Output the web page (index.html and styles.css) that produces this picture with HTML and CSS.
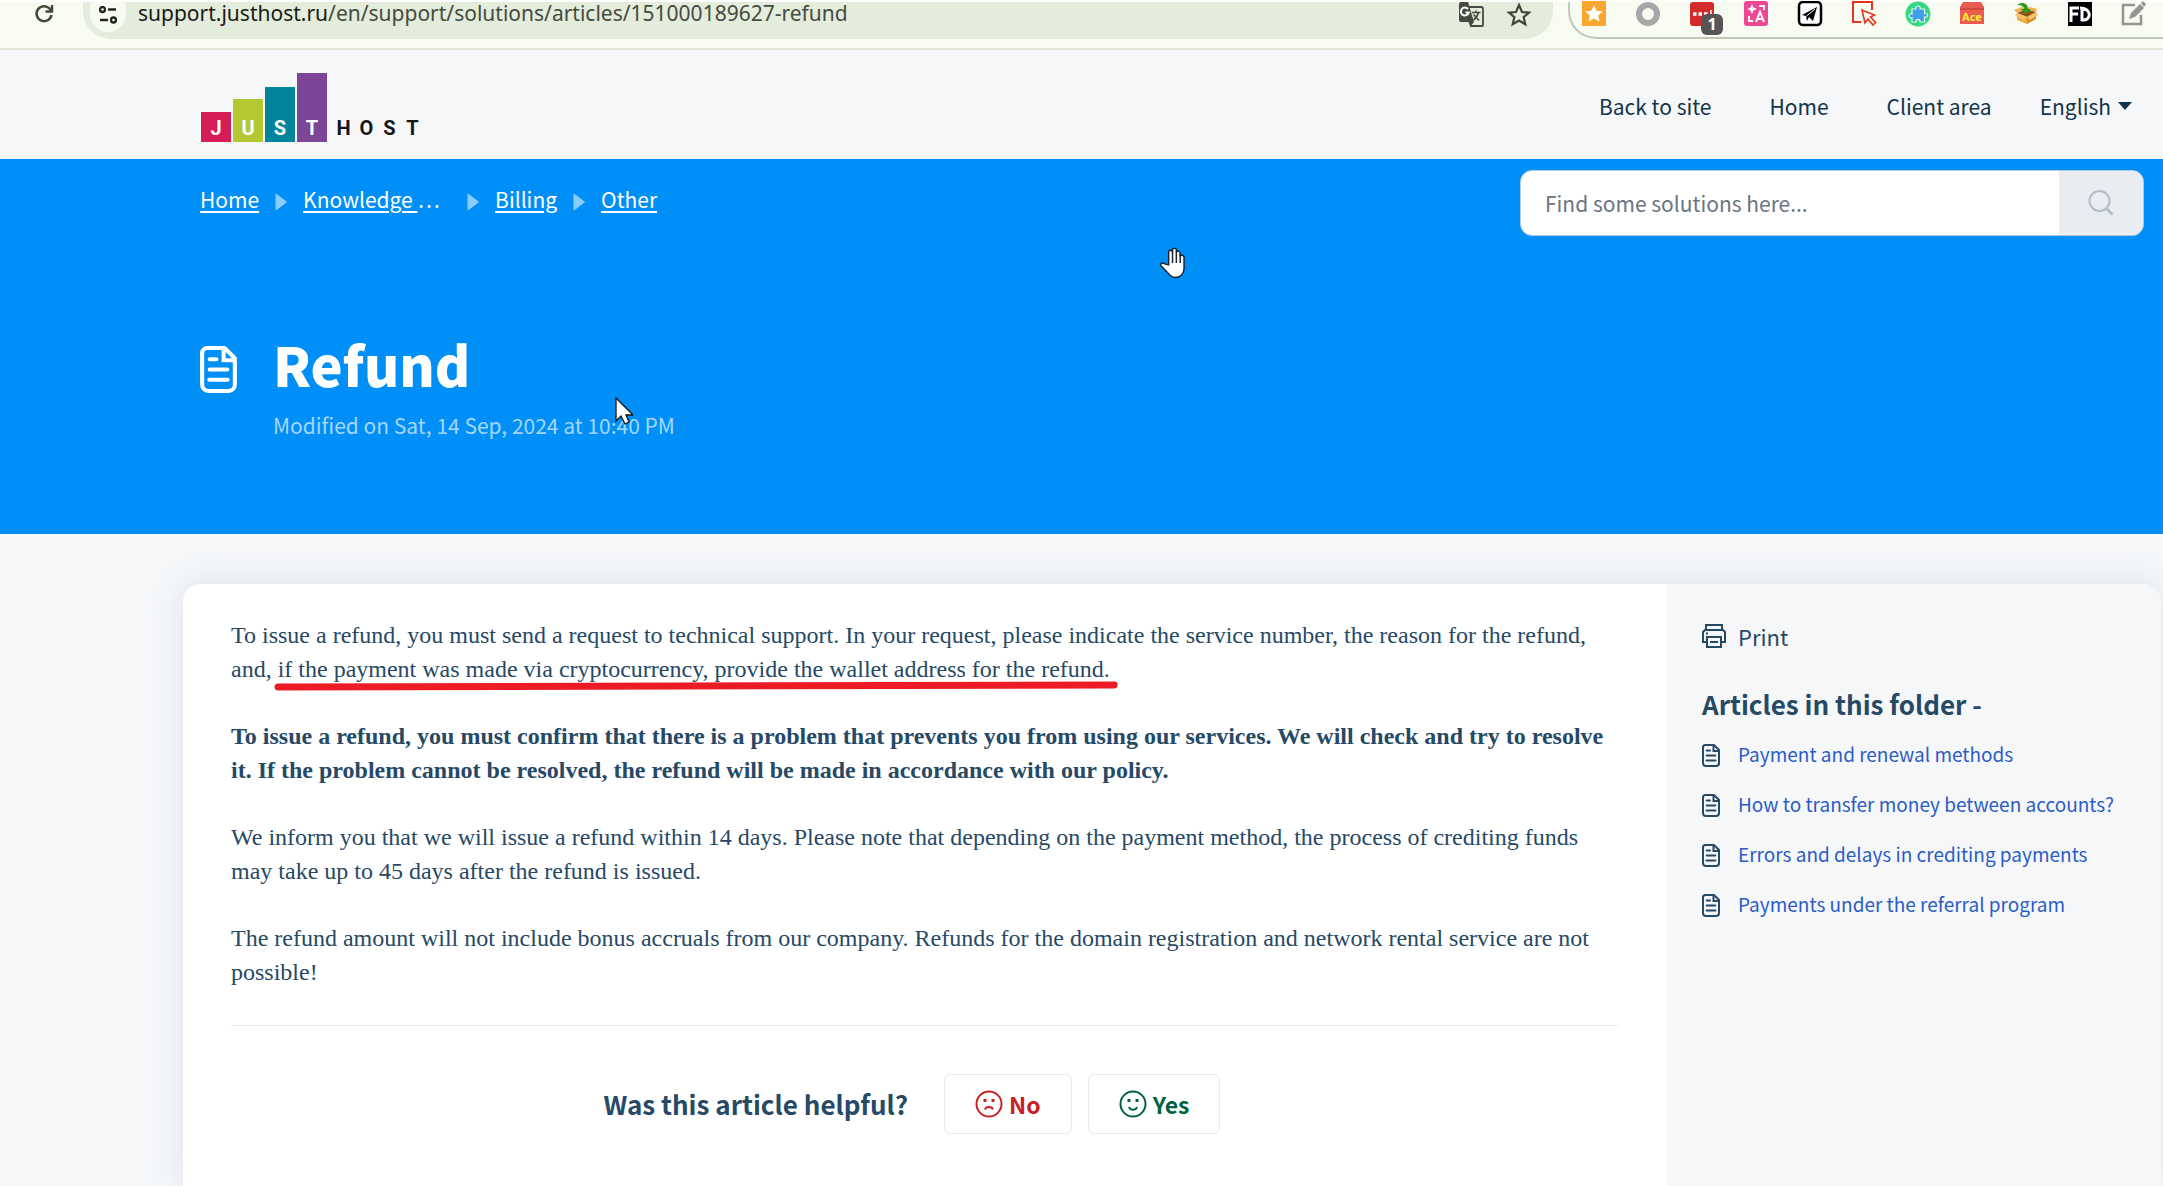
FILE: index.html
```html
<!DOCTYPE html>
<html lang="en">
<head>
<meta charset="utf-8">
<title>Refund</title>
<link rel="stylesheet" href="styles.css">
</head>
<body>
<svg class="sprite" aria-hidden="true">
  <symbol id="doc" viewBox="0 0 18 23">
    <path d="M3 1h9l5 5v13a3 3 0 0 1-3 3H4a3 3 0 0 1-3-3V3.500a2.500 2.500 0 0 1 2-2.500z" fill="none" stroke="currentColor" stroke-width="2" stroke-linejoin="round"/>
    <path d="M11.500 1v6H17" fill="none" stroke="currentColor" stroke-width="2"/>
    <path d="M4.700 6.500H8M4.700 11.500h8.600M4.500 16.500h9" fill="none" stroke="currentColor" stroke-width="2" stroke-linecap="round"/>
  </symbol>
  <symbol id="tri" viewBox="0 0 12 18"><path d="M1 1v16L11.500 9z" fill="currentColor" stroke="currentColor" stroke-linejoin="round"/></symbol>
</svg>

<header class="browser">
  <button class="reload" aria-label="Reload">
    <svg width="20" height="22" viewBox="0 0 20 22" fill="none" stroke="#3f4a3c" stroke-width="2.500"><path d="M17.500 12a7.500 7.500 0 1 1-2-6.500l2 2M18 2v6.500h-6.500"/></svg>
  </button>
  <div class="address">
    <span class="site-info"><svg width="20" height="18" viewBox="0 0 20 18" fill="none" stroke="#20251d" stroke-width="2.300"><circle cx="4.500" cy="3.500" r="2.500"/><path d="M10 3.500h8M2 14h8"/><circle cx="15.500" cy="14" r="2.500"/></svg></span>
    <span class="url"><b>support.justhost.ru</b>/en/support/solutions/articles/151000189627-refund</span>
    <svg class="translate" width="26" height="26" viewBox="0 0 26 26"><path d="M11 5h12a2 2 0 0 1 2 2v16a1 1 0 0 1-1 1H13l-2-5" fill="#e4ecdc" stroke="#444c41" stroke-width="1.800"/><path d="M2 0h8l6 20H3a2 2 0 0 1-2-2V2z" fill="#444c41"/><path d="M11 20h5l-3 4z" fill="#444c41"/><path d="M10 7a4 4 0 1 0 .8 3.500H7.500" fill="none" stroke="#fff" stroke-width="2"/><path d="M14 10.500h8.500M18 8.500v2M15.500 18c3-2 4-4 5-7.500M15.500 12.500l5.500 6" fill="none" stroke="#444c41" stroke-width="1.600"/></svg>
    <svg width="26" height="26" viewBox="0 0 26 26"><path d="M13 3l3 7 7 .6-5.400 4.600 1.700 7L13 18.500l-6.300 3.700 1.700-7L3 10.600l7-.6z" fill="none" stroke="#3f463c" stroke-width="2.200"/></svg>
  </div>
  <div class="extensions">
    <svg viewBox="0 0 26 26"><path d="M1 0h24v25H1z" fill="#fba62f"/><path d="M13 4l2.600 5.700 6.100.7-4.500 4.200 1.200 6-5.400-3-5.400 3 1.200-6-4.500-4.200 6.100-.7z" fill="#fff"/></svg>
    <svg viewBox="0 0 26 26"><circle cx="13" cy="13" r="9" fill="none" stroke="#a6a6a6" stroke-width="6"/></svg>
    <span class="badged"><svg viewBox="0 0 26 26"><rect x="1" y="1" width="24" height="24" rx="3" fill="#d32b2b"/><path d="M4 13h3.500M9.500 13H13M15 13h3.500" stroke="#fff" stroke-width="3.500"/><path d="M22 9v7" stroke="#fff" stroke-width="1.500"/></svg><span class="badge">1</span></span>
    <svg viewBox="0 0 26 26"><rect x="1" y="0" width="24" height="25" rx="3" fill="#ee4793"/><path d="M9 3l1.500 3.500L14 8l-3.500 1.500L9 13l-1.500-3.500L4 8l3.500-1.500z" fill="#fff"/><path d="M13 21l4-10 4 10M14.500 18h5M16 5h5v4M6 15v5h4" fill="none" stroke="#fff" stroke-width="2"/></svg>
    <svg viewBox="0 0 26 26"><rect x="2" y="1" width="22" height="23" rx="4" fill="#fff" stroke="#000" stroke-width="2.500"/><path d="M5 14L20 6l-4 14-4-4-2 4-1-5z"/><path d="M9.500 15L18 8" stroke="#fff"/></svg>
    <svg viewBox="0 0 26 26" fill="none" stroke="#e8321e" stroke-width="2"><path d="M10 21H2V1h19v8"/><path d="M11 9l3 13 3-4 5 6 2.500-2.500-5-5.500 4-2z" stroke-width="1.600"/></svg>
    <svg viewBox="0 0 26 26"><circle cx="13" cy="13" r="12.500" fill="#36d77f"/><path d="M7 8h4c-1.500-4 5.500-4 4 0h4.500v4.500c4-1.500 4 5 0 3.500v5H15c1-3.500-5-3.500-4 0H7v-4.500c-4 1.500-4-5 0-3.500z" fill="#3f9fe8" stroke="#d9fbe8" stroke-width="1.200"/></svg>
    <svg viewBox="0 0 26 26"><path d="M4 1h18l3 5v17H1V6z" fill="#eb5c50"/><path d="M1 8h24" stroke="#b83a33"/><text x="13" y="20" text-anchor="middle" class="ace">Ace</text></svg>
    <svg viewBox="0 0 26 26"><path d="M4 12l10 4 9-5v7l-9 5-10-4z" fill="#eda93f"/><path d="M14 16v7l9-5v-7z" fill="#d98f2e"/><path d="M4 12l9-4 10 3-9 5z" fill="#8f5417"/><path d="M4 12l-2 3 9 4 3-3zM23 11l2 3-8 5-3-3z" fill="#f6c36b"/><path d="M4 12L1 9l8-3 4 2zM23 11l1-3-7-2-4 2z" fill="#f0b352"/><path d="M4 4c5-4 11-2 11 4h3l-5 5-5-5h3c0-3-3-4-7-4z" fill="#2e9b1c"/></svg>
    <svg viewBox="0 0 26 26"><path d="M1 1h24v24H1z"/><path d="M4 21V7h8M4 13h7M15 7v12c10 1 10-12-2-12" fill="none" stroke="#fff" stroke-width="3"/></svg>
    <svg viewBox="0 0 26 26" fill="none" stroke="#929590" stroke-width="2.500"><path d="M14 4H2v19h18V14"/><path d="M8 18l2-6L19 3l4 4-9 9z" fill="#929590" stroke="none"/><path d="M20 2l2-2 3 3-2 3z" fill="#929590" stroke="none"/></svg>
  </div>
</header>

<nav class="topnav" aria-label="Main">
  <a class="logo" href="#" aria-label="Just Host">
    <span class="bar bar-j">J</span><span class="bar bar-u">U</span><span class="bar bar-s">S</span><span class="bar bar-t">T</span>
    <span class="host"><i>H</i><i>O</i><i>S</i><i>T</i></span>
  </a>
  <div class="links">
    <a href="#">Back to site</a>
    <a href="#">Home</a>
    <a href="#">Client area</a>
    <button class="language">English<svg width="14" height="8" viewBox="0 0 14 8"><path d="M0 0h14L7 8z" fill="currentColor"/></svg></button>
  </div>
</nav>

<section class="hero">
  <div class="hero-top">
    <nav class="crumbs" aria-label="Breadcrumb">
      <a href="#">Home</a><svg><use href="#tri"/></svg>
      <span class="crumb-wide"><a href="#">Knowledge </a>…</span><svg><use href="#tri"/></svg>
      <a href="#">Billing</a><svg><use href="#tri"/></svg>
      <a href="#">Other</a>
    </nav>
    <form class="search" onsubmit="return false">
      <input type="search" aria-label="Search solutions" placeholder="Find some solutions here...">
      <button aria-label="Search"><svg width="28" height="28" viewBox="0 0 28 28" fill="none" stroke="#b1bec9" stroke-width="2"><circle cx="12.500" cy="12" r="10"/><path d="M19.500 19.500l6 6" stroke-width="2.500"/></svg></button>
    </form>
  </div>
  <div class="title">
    <svg class="title-icon"><use href="#doc"/></svg>
    <div>
      <h1>Refund</h1>
      <p>Modified on Sat, 14 Sep, 2024 at 10:40 PM</p>
    </div>
  </div>
  <svg class="hand" viewBox="0 0 26 32"><path d="M9 18V5c0-3 4-3 4 0V3c0-3 4-3 4 0v2c0-2 4-2 4 1v3c1-2 4-1 4 1v12c0 5-4 9-9 9-4 0-6-2-8-5L1 19c-1-3 2-4 4-2z" fill="#fff" stroke="#14202c" stroke-width="1.500"/><path d="M13 4v12M17 4v12M21 7v9" stroke="#14202c" stroke-width="1.500"/></svg>
  <svg class="pointer" viewBox="0 0 18 28"><path d="M1 1v23l5-5 4 8 4-2-3-7h7z" fill="#fff" stroke="#111" stroke-width="1.300"/></svg>
</section>

<main class="sheet">
  <article>
    <p>To issue a refund, you must send a request to technical support. In your request, please indicate the service number, the reason for the refund,<br>and, <span class="marked">if the payment was made via cryptocurrency, provide the wallet address for the refund.<svg class="stroke" viewBox="0 0 844 12" preserveAspectRatio="none"><path d="M4 7L840 5" stroke="#ed1c24" stroke-width="7" stroke-linecap="round"/></svg></span></p>
    <p><strong>To issue a refund, you must confirm that there is a problem that prevents you from using our services. We will check and try to resolve<br>it. If the problem cannot be resolved, the refund will be made in accordance with our policy.</strong></p>
    <p>We inform you that we will issue a refund within 14 days. Please note that depending on the payment method, the process of crediting funds<br>may take up to 45 days after the refund is issued.</p>
    <p>The refund amount will not include bonus accruals from our company. Refunds for the domain registration and network rental service are not<br>possible!</p>
    <div class="feedback">
      <h2>Was this article helpful?</h2>
      <button class="no"><svg viewBox="0 0 28 28" fill="none" stroke="currentColor" stroke-width="2"><circle cx="14" cy="14" r="12.500"/><path d="M10 19.500c1-3.500 7-3.500 8 0"/><path d="M10 9v3M18 9v3" stroke-width="3"/></svg>No</button>
      <button class="yes"><svg viewBox="0 0 28 28" fill="none" stroke="currentColor" stroke-width="2"><circle cx="14" cy="14" r="12.500"/><path d="M10 17c1 3.500 7 3.500 8 0"/><path d="M10 9v3M18 9v3" stroke-width="3"/></svg>Yes</button>
    </div>
  </article>
  <aside>
    <button class="print"><svg width="24" height="24" viewBox="0 0 24 24" fill="none" stroke="currentColor" stroke-width="2"><path d="M4 6V1h16v5M4 18H1V8l2-2h18l2 2v10h-3"/><path d="M5 13h14v10H5zM8 18h8M4 9.500h2"/></svg>Print</button>
    <h2>Articles in this folder -</h2>
    <ul>
      <li><svg><use href="#doc"/></svg><a href="#">Payment and renewal methods</a></li>
      <li><svg><use href="#doc"/></svg><a href="#">How to transfer money between accounts?</a></li>
      <li><svg><use href="#doc"/></svg><a href="#">Errors and delays in crediting payments</a></li>
      <li><svg><use href="#doc"/></svg><a href="#">Payments under the referral program</a></li>
    </ul>
  </aside>
</main>
</body>
</html>
```

FILE: styles.css
```css
* { box-sizing: border-box; }
body { margin: 0; background: #f5f7f9; color: #264966; font: 21px/32px "Noto Sans CJK SC", "Noto Sans", sans-serif; min-height: 100vh; display: flex; flex-direction: column; overflow-x: hidden; }
h1, h2, p, ul { margin: 0; padding: 0; }
button { border: 0; padding: 0; background: none; font: inherit; color: inherit; display: flex; align-items: center; }
a { color: inherit; }
svg { display: block; flex: none; }
.sprite { position: absolute; width: 0; height: 0; }

.browser { height: 50px; flex: none; background: #f8fbf2; border-bottom: 2px solid #e1e6d9; border-top: 2px solid #fdfefb; display: flex; align-items: flex-start; padding-left: 34px; }
.address { flex: 1; height: 37px; margin-left: 29px; padding: 0 21px 0 7px; background: #e4ecdc; border-radius: 0 0 28px 28px; display: flex; align-items: flex-start; gap: 22px; }
.reload { margin-top: 1px; }
.site-info { width: 36px; height: 30px; border-radius: 0 0 18px 18px; background: #f8fbf2; display: grid; place-items: center; padding-bottom: 4px; }
.url { flex: 1; margin-left: -10px; font: 21px/22px "Noto Sans", sans-serif; color: #444b40; }
.url b { font-weight: 400; color: #181c15; }
.extensions { width: 595px; height: 37px; margin-left: 15px; padding-left: 11px; border: solid #c0c6b9; border-width: 0 0 2px 2px; border-radius: 0 0 0 28px; display: flex; gap: 28px; }
.extensions svg { width: 26px; height: 26px; margin-top: -1px; }
.badged { position: relative; }
.badge { position: absolute; left: 12px; top: 12px; width: 22px; height: 21px; border-radius: 6px; background: #555; color: #fff; font: 700 16px/21px "Noto Sans", sans-serif; text-align: center; }
.ace { font: 700 11px "Noto Sans", sans-serif; fill: #ffec3d; }

.topnav { height: 109px; flex: none; display: flex; justify-content: space-between; align-items: center; padding: 0 31px 0 201px; color: #12344d; }
.logo { display: flex; align-items: flex-end; gap: 2px; text-decoration: none; font: 700 20px/28px Roboto, sans-serif; color: #fff; margin-top: 6px; }
.bar { width: 30px; display: flex; align-items: flex-end; justify-content: center; }
.bar-j { height: 30px; background: #d51c57; }
.bar-u { height: 43px; background: #b4c832; }
.bar-s { height: 55px; background: #02849c; }
.bar-t { height: 69px; background: #7c4596; }
.host { display: flex; color: #161616; padding-left: 3px; }
.host i { font-style: normal; width: 23px; text-align: center; }
.links { display: flex; align-items: center; margin-top: 3px; }
.links a { text-decoration: none; margin-right: 58px; }
.links a:nth-child(3) { margin-right: 48px; }
.language { gap: 7px; }

.hero { position: relative; height: 375px; flex: none; background: #008ff7; color: #fff; padding: 11px 19px 0 200px; }
.hero-top { display: flex; justify-content: space-between; align-items: flex-start; }
.crumbs { display: flex; align-items: center; gap: 16px; padding-top: 13px; }
.crumbs svg { width: 12px; height: 18px; color: #8accfc; margin-top: 6px; }
.crumb-wide { width: 148px; }
.crumbs a { text-underline-offset: 3px; text-decoration-thickness: 2px; }
.search { width: 624px; height: 66px; display: flex; border: 1px solid #b5c9d9; border-radius: 12px; overflow: hidden; background: #fff; }
.search input { flex: 1; min-width: 0; border: 0; outline: 0; padding: 0 24px; font: inherit; background: none; }
.search input::placeholder { color: #6b7480; opacity: 1; }
.search button { width: 84px; justify-content: center; background: #e9edf2; }
.title { display: flex; margin-top: 92px; }
.title-icon { width: 37px; height: 47px; margin: 18px 36px 0 0; }
.title h1 { font-size: 54px; line-height: 72px; font-weight: 900; }
.title p { color: #a5d7fd; margin-top: 9px; }
.hand { position: absolute; left: 1160px; top: 88px; width: 25px; height: 32px; }
.pointer { position: absolute; left: 615px; top: 238px; width: 18px; height: 28px; }

.sheet { flex: 1; margin: 49px 2px 0 183px; background: #fff; border-radius: 18px 18px 0 0; box-shadow: 0 0 30px #dde3e9; display: flex; overflow: hidden; border-top: 1px solid #e8edf2; clip-path: inset(-40px -10px 0 -40px); }
article { flex: 1; padding: 34px 48px 0; font: 24px/34px "Liberation Serif", serif; white-space: nowrap; }
article p { margin-bottom: 33px; }
.marked { position: relative; }
.stroke { position: absolute; left: -4px; bottom: -10px; width: calc(100% + 12px); height: 12px; }
.feedback { margin-top: 36px; border-top: 1px solid #e6ebf0; display: flex; justify-content: center; align-items: center; padding: 48px 26px 48px 0; gap: 16px; font-family: "Noto Sans CJK SC", sans-serif; }
h2 { font-size: 26px; line-height: 36px; font-weight: 700; }
.feedback h2 { margin-right: 20px; }
.feedback button { height: 60px; padding: 0 30px; border: 1px solid #e6ebf0; border-radius: 6px; font-size: 23px; font-weight: 700; gap: 6px; }
.feedback svg { width: 28px; height: 28px; }
.no { color: #c82124; }
.yes { color: #00633f; }
aside { width: 494px; background: #f5f7f9; padding: 36px 0 0 35px; }
.print { gap: 12px; font-size: 22px; }
aside h2 { margin: 34px 0 16px; }
aside ul { list-style: none; display: grid; gap: 18px; }
aside li { display: flex; align-items: center; gap: 18px; font-size: 19px; color: #264966; }
aside li svg { width: 18px; height: 23px; margin-top: 3px; }
aside li a { color: #2c5cc5; text-decoration: none; }
```
